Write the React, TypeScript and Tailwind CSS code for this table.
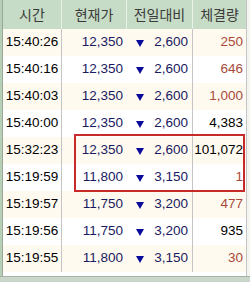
import React from "react";

const rows = [
  { time: "15:40:26", price: "12,350", diff: "2,600", vol: "250", up: true },
  { time: "15:40:16", price: "12,350", diff: "2,600", vol: "646", up: true },
  { time: "15:40:03", price: "12,350", diff: "2,600", vol: "1,000", up: true },
  { time: "15:40:00", price: "12,350", diff: "2,600", vol: "4,383", up: false },
  { time: "15:32:23", price: "12,350", diff: "2,600", vol: "101,072", up: false },
  { time: "15:19:59", price: "11,800", diff: "3,150", vol: "1", up: true },
  { time: "15:19:57", price: "11,750", diff: "3,200", vol: "477", up: true },
  { time: "15:19:56", price: "11,750", diff: "3,200", vol: "935", up: false },
  { time: "15:19:55", price: "11,800", diff: "3,150", vol: "30", up: true },
];

const headers = ["시간", "현재가", "전일대비", "체결량"];

function Down() {
  return (
    <svg width="8" height="8" viewBox="0 0 8 8" className="shrink-0">
      <path d="M0 1 L8 1 L4 8 Z" fill="#0a0a9a" />
    </svg>
  );
}

export default function App() {
  return (
    <div className="relative w-[250px] h-[282px] bg-[#f4f4f0] overflow-hidden font-['Liberation_Sans','Noto_Sans_CJK_KR',sans-serif] text-[13.5px]">
      <div className="flex h-[276px]">
        {/* left strip */}
        <div className="w-[3px] bg-[#b7cfb7] border-r border-[#9aa89a]" />
        <div className="flex flex-col">
          {/* header */}
          <div className="grid grid-cols-[59px_65px_66px_53px] h-[29px] bg-[#c6dcc6]">
            {headers.map((h, i) => (
              <div
                key={h}
                className={`flex items-center justify-center text-[#3a3a3a] text-[14px] font-['Noto_Sans_CJK_KR',sans-serif] ${i < 3 ? "border-r border-[#e8f2e8]" : ""}`}
              >
                {h}
              </div>
            ))}
          </div>
          {/* body */}
          <div className="flex flex-col">
            {rows.map((r, i) => (
              <div
                key={r.time}
                className={`grid grid-cols-[59px_65px_66px_53px] h-[27px] ${i % 2 === 0 ? "bg-[#fffaf0]" : "bg-white"}`}
              >
                <div className="flex items-center justify-center text-black border-r border-[#c4c4c4]">{r.time}</div>
                <div className="flex items-center justify-end pr-[4px] text-[#1a1a60]">{r.price}</div>
                <div className="flex items-center justify-between pl-[9px] pr-[4px] text-[#1a1a60] border-r border-[#c4c4c4]">
                  <Down />
                  <span>{r.diff}</span>
                </div>
                <div className={`flex items-center justify-end pr-[3px] ${r.up ? "text-[#a84a3a]" : "text-black"}`}>{r.vol}</div>
              </div>
            ))}
            <div className="h-[4px] bg-white" />
          </div>
        </div>
        <div className="flex-1 border-l border-[#c4c4c4] bg-[#f4f4f0]" />
      </div>
      <div className="h-[6px] bg-[#c9d6c9] border-t border-[#a6b2a6]" />

      {/* highlight box */}
      <div className="absolute left-[74px] top-[134px] w-[171px] h-[58px] border-2 border-[#c82a2a]" />
    </div>
  );
}
